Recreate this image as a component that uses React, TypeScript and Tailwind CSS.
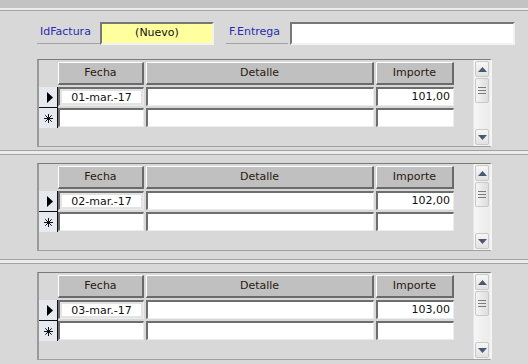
import React from "react";

const FONT = "font-['DejaVu_Sans',sans-serif]";

// sunken (white data cell) and raised (column header) borders, Access 2007 style
const sunken =
  "border-t-2 border-l-2 border-b border-r border-t-[#6e6e6e] border-l-[#6e6e6e] border-b-[#ececec] border-r-[#ececec] bg-white";
const raised =
  "border-t border-l border-b-2 border-r-2 border-t-white border-l-white border-b-[#6a6a6a] border-r-[#6a6a6a] bg-[#c0c0c0]";

const Arrow = ({ dir }: { dir: "up" | "down" }) => (
  <svg width="9" height="5" viewBox="0 0 9 5">
    <path
      d={dir === "up" ? "M0 5 L4.5 0 L9 5 Z" : "M0 0 L4.5 5 L9 0 Z"}
      fill="#4b5674"
    />
  </svg>
);

const ScrollBtn = ({ dir }: { dir: "up" | "down" }) => (
  <div className="mx-px h-[16px] flex items-center justify-center rounded-[2px] border border-[#c9c9c9] bg-gradient-to-b from-[#f7f7f7] to-[#e2e2e2]">
    <Arrow dir={dir} />
  </div>
);

const ScrollBar = () => (
  <div className="w-[17px] h-full flex flex-col bg-gradient-to-r from-[#f6f6f6] to-[#ebebeb] border-l border-[#e4e4e4]">
    <div className="mt-px">
      <ScrollBtn dir="up" />
    </div>
    <div className="mx-px mt-px h-[25px] flex flex-col items-center justify-center gap-[2px] rounded-[2px] border border-[#c9c9c9] bg-gradient-to-r from-[#f4f4f4] to-[#dedede]">
      <div className="w-[8px] h-px bg-[#7b7b7b]" />
      <div className="w-[8px] h-px bg-[#7b7b7b]" />
      <div className="w-[8px] h-px bg-[#7b7b7b]" />
    </div>
    <div className="mt-auto mb-px">
      <ScrollBtn dir="down" />
    </div>
  </div>
);

const Star = () => (
  <svg width="9" height="9" viewBox="0 0 9 9">
    <g stroke="#111" strokeWidth="1">
      <line x1="4.5" y1="0" x2="4.5" y2="9" />
      <line x1="0" y1="4.5" x2="9" y2="4.5" />
      <line x1="1.3" y1="1.3" x2="7.7" y2="7.7" />
      <line x1="7.7" y1="1.3" x2="1.3" y2="7.7" />
    </g>
  </svg>
);

const Subform = ({ fecha, importe }: { fecha: string; importe: string }) => (
  <div className="ml-[37px] w-[455px] h-[88px] flex border-t border-l-2 border-r-2 border-b border-t-[#7a7a7a] border-l-[#9a9a9a] border-r-[#f4f4f4] border-b-[#a0a0a0] bg-[#d8d8d8]">
    <div className="flex-1 pt-[2px] text-[11px] text-[#111]">
      {/* header */}
      <div className="flex h-[23px] mb-[2px]">
        <div className="w-[19px]" />
        <div className={`${raised} w-[86px] flex items-center justify-center text-[#2a1a10]`}>Fecha</div>
        <div className={`${raised} ml-[2px] w-[228px] flex items-center justify-center text-[#2a1a10]`}>Detalle</div>
        <div className={`${raised} ml-[2px] w-[78px] flex items-center justify-center text-[#2a1a10]`}>Importe</div>
      </div>
      {/* current record */}
      <div className="flex h-[21px]">
        <div className="w-[19px] h-[21px] bg-[#e6eaf0] border-r border-b border-[#111] flex items-center pl-[8px]">
          <svg width="6" height="11" viewBox="0 0 6 11">
            <path d="M0 0 L6 5.5 L0 11 Z" fill="#000" />
          </svg>
        </div>
        <div className={`${sunken} w-[86px] h-[19px]`}>
          <div className="h-full border-2 border-[#e3e3e3] flex items-center justify-center leading-none">
            {fecha}
          </div>
        </div>
        <div className={`${sunken} ml-[2px] w-[228px] h-[19px]`} />
        <div className={`${sunken} ml-[2px] w-[78px] h-[19px] flex items-center justify-end pr-[3px]`}>
          {importe}
        </div>
      </div>
      {/* new record */}
      <div className="flex h-[19px]">
        <div className="w-[19px] h-[20px] bg-[#e6eaf0] border-r border-[#111] flex items-center justify-center pl-px">
          <Star />
        </div>
        <div className={`${sunken} w-[86px] h-[19px]`} />
        <div className={`${sunken} ml-[2px] w-[228px] h-[19px]`} />
        <div className={`${sunken} ml-[2px] w-[78px] h-[19px]`} />
      </div>
    </div>
    <ScrollBar />
  </div>
);

const Separator = () => (
  <div className="h-[5px] border-t border-b border-[#a2a2a2] bg-[#ebebeb]" />
);

export default function App() {
  return (
    <div className={`w-[528px] h-[364px] overflow-hidden bg-[#d8d8d8] ${FONT}`}>
      {/* form header band */}
      <div className="h-[8px] bg-[#c3c3c3]" />
      <div className="h-[2px] bg-[#ececec]" />
      <div className="h-px bg-[#a2a2a2]" />

      {/* record 1 with invoice fields */}
      <div className="h-[139px]">
        <div className="pt-[11px] flex items-start text-[11px]">
          <div className="ml-[37px] w-[63px] h-[22px] pl-[3px] flex items-center border-b border-[#a4a4a4] text-[#2b2bb0]">
            IdFactura
          </div>
          <div className="w-[114px] h-[23px] flex items-center justify-center border-t-2 border-l-2 border-b-2 border-r-2 border-t-[#777] border-l-[#777] border-b-[#f2f2f2] border-r-[#f2f2f2] bg-[#ffff9e] text-[#111]">
            (Nuevo)
          </div>
          <div className="ml-[12px] w-[62px] h-[22px] pl-[3px] flex items-center border-b border-[#a4a4a4] text-[#2b2bb0]">
            F.Entrega
          </div>
          <div className="ml-[2px] w-[225px] h-[23px] border-t-2 border-l-2 border-b-2 border-r-2 border-t-[#777] border-l-[#777] border-b-[#f2f2f2] border-r-[#f2f2f2] bg-white" />
        </div>
        <div className="mt-[14px]">
          <Subform fecha="01-mar.-17" importe="101,00" />
        </div>
      </div>
      <Separator />

      <div className="h-[104px] pt-[8px]">
        <Subform fecha="02-mar.-17" importe="102,00" />
      </div>
      <Separator />

      <div className="h-[100px] pt-[8px]">
        <Subform fecha="03-mar.-17" importe="103,00" />
      </div>
    </div>
  );
}
